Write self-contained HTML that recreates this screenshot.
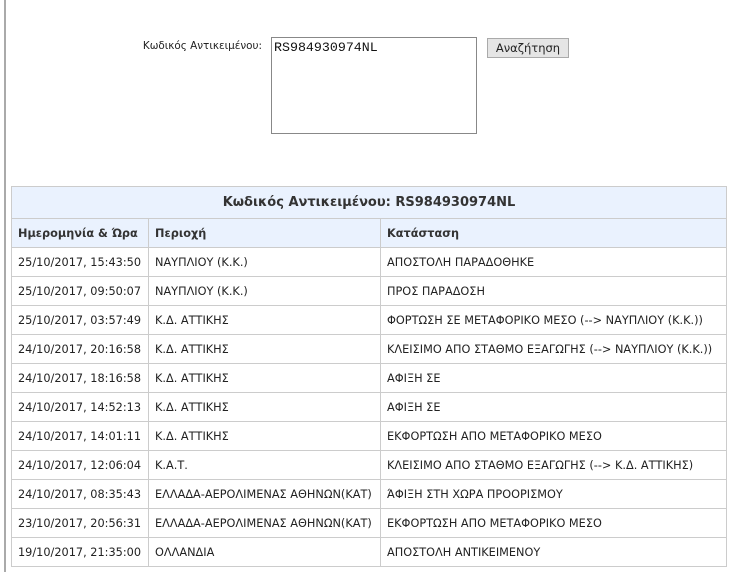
<!DOCTYPE html>
<html><head><meta charset="utf-8"><style>
body{margin:0;width:729px;height:572px;background:#fff;font-family:"DejaVu Sans","Liberation Sans",sans-serif;font-size:11.3px;color:#222;position:relative;overflow:hidden}
.vl{position:absolute;left:4px;top:0;width:2px;height:572px;background:#aaa}
.lbl{position:absolute;right:467px;top:40px;font-size:10.4px;white-space:nowrap}
.ta{position:absolute;left:271px;top:37px;width:206px;height:97px;border:1px solid #888;box-sizing:border-box;font-family:"Liberation Mono","Courier New",monospace;font-size:13.3px;padding:2px 2px;color:#111}
.btn{position:absolute;left:487px;top:38px;width:82px;height:20px;border:1px solid #aaa;background:#e5e5e5;box-sizing:border-box;text-align:center;line-height:18px;font-size:11.5px}
table{position:absolute;left:11px;top:186px;width:716px;border-collapse:collapse}
td,th{border:1px solid #ccc;padding:0 6px;text-align:left;white-space:nowrap}
.t th{background:#eaf2fe;text-align:center;font-size:13px;height:31px;color:#333}
.h th{background:#eaf2fe;height:28px;color:#333}
td{height:28px}
</style></head><body>
<div class="vl"></div>
<div class="lbl">Κωδικός Αντικειμένου:</div>
<div class="ta">RS984930974NL</div>
<div class="btn">Αναζήτηση</div>
<table>
<tr class="t"><th colspan="3">Κωδικός Αντικειμένου: RS984930974NL</th></tr>
<tr class="h"><th style="width:124px">Ημερομηνία &amp; Ώρα</th><th style="width:219px">Περιοχή</th><th>Κατάσταση</th></tr>
<tr><td>25/10/2017, 15:43:50</td><td>ΝΑΥΠΛΙΟΥ (Κ.Κ.)</td><td>ΑΠΟΣΤΟΛΗ ΠΑΡΑΔΟΘΗΚΕ</td></tr>
<tr><td>25/10/2017, 09:50:07</td><td>ΝΑΥΠΛΙΟΥ (Κ.Κ.)</td><td>ΠΡΟΣ ΠΑΡΑΔΟΣΗ</td></tr>
<tr><td>25/10/2017, 03:57:49</td><td>Κ.Δ. ΑΤΤΙΚΗΣ</td><td>ΦΟΡΤΩΣΗ ΣΕ ΜΕΤΑΦΟΡΙΚΟ ΜΕΣΟ (--&gt; ΝΑΥΠΛΙΟΥ (Κ.Κ.))</td></tr>
<tr><td>24/10/2017, 20:16:58</td><td>Κ.Δ. ΑΤΤΙΚΗΣ</td><td>ΚΛΕΙΣΙΜΟ ΑΠΟ ΣΤΑΘΜΟ ΕΞΑΓΩΓΗΣ (--&gt; ΝΑΥΠΛΙΟΥ (Κ.Κ.))</td></tr>
<tr><td>24/10/2017, 18:16:58</td><td>Κ.Δ. ΑΤΤΙΚΗΣ</td><td>ΑΦΙΞΗ ΣΕ</td></tr>
<tr><td>24/10/2017, 14:52:13</td><td>Κ.Δ. ΑΤΤΙΚΗΣ</td><td>ΑΦΙΞΗ ΣΕ</td></tr>
<tr><td>24/10/2017, 14:01:11</td><td>Κ.Δ. ΑΤΤΙΚΗΣ</td><td>ΕΚΦΟΡΤΩΣΗ ΑΠΟ ΜΕΤΑΦΟΡΙΚΟ ΜΕΣΟ</td></tr>
<tr><td>24/10/2017, 12:06:04</td><td>Κ.Α.Τ.</td><td>ΚΛΕΙΣΙΜΟ ΑΠΟ ΣΤΑΘΜΟ ΕΞΑΓΩΓΗΣ (--&gt; Κ.Δ. ΑΤΤΙΚΗΣ)</td></tr>
<tr><td>24/10/2017, 08:35:43</td><td>ΕΛΛΑΔΑ-ΑΕΡΟΛΙΜΕΝΑΣ ΑΘΗΝΩΝ(ΚΑΤ)</td><td>ΆΦΙΞΗ ΣΤΗ ΧΩΡΑ ΠΡΟΟΡΙΣΜΟΥ</td></tr>
<tr><td>23/10/2017, 20:56:31</td><td>ΕΛΛΑΔΑ-ΑΕΡΟΛΙΜΕΝΑΣ ΑΘΗΝΩΝ(ΚΑΤ)</td><td>ΕΚΦΟΡΤΩΣΗ ΑΠΟ ΜΕΤΑΦΟΡΙΚΟ ΜΕΣΟ</td></tr>
<tr><td>19/10/2017, 21:35:00</td><td>ΟΛΛΑΝΔΙΑ</td><td>ΑΠΟΣΤΟΛΗ ΑΝΤΙΚΕΙΜΕΝΟΥ</td></tr>
</table>
</body></html>
